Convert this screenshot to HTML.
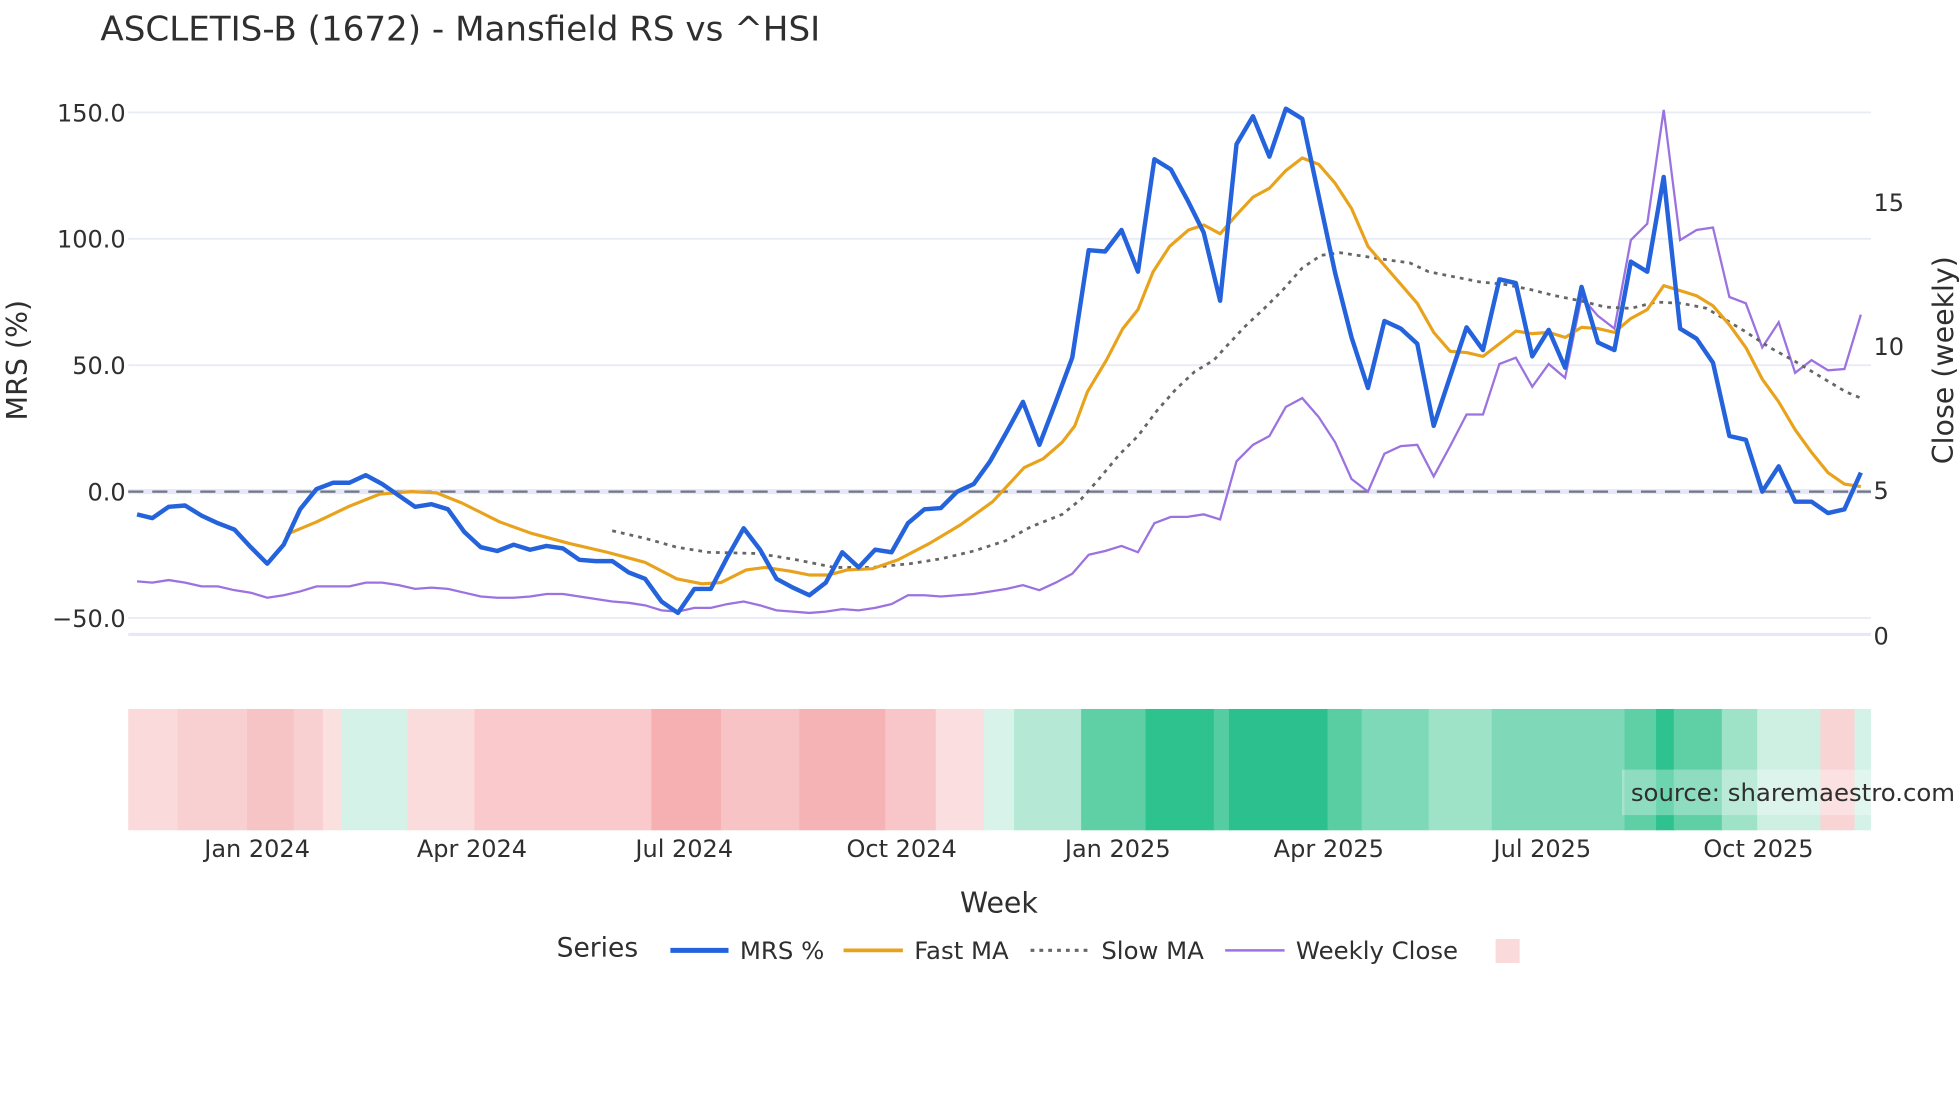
<!DOCTYPE html>
<html><head><meta charset="utf-8"><style>
html,body{margin:0;padding:0;background:#fff;overflow:hidden}
svg{display:block}
text{font-family:"DejaVu Sans","Liberation Sans",sans-serif;fill:#2f2f2f}
</style></head><body>
<svg width="1960" height="1102" viewBox="0 0 1550 872" xmlns="http://www.w3.org/2000/svg">
<rect width="1550" height="872" fill="#fff"/>
<text x="79" y="32" font-size="27" fill="#333">ASCLETIS-B (1672) - Mansfield RS vs ^HSI</text>
<!-- grid -->
<g stroke="#e8ecf4" stroke-width="1.5">
<line x1="101" x2="1480" y1="89" y2="89"/><line x1="101" x2="1480" y1="189" y2="189"/>
<line x1="101" x2="1480" y1="289" y2="289"/><line x1="101" x2="1480" y1="489" y2="489"/>
</g>
<line x1="101" x2="1480" y1="502" y2="502" stroke="#e6e8fa" stroke-width="2.5"/>
<line x1="101" x2="1480" y1="389" y2="389" stroke="#e6e8fa" stroke-width="4"/>
<line x1="101" x2="1480" y1="389" y2="389" stroke="#6e7681" stroke-width="1.8" stroke-dasharray="12,7"/>
<g font-size="19" text-anchor="end" fill="#333">
<text x="99" y="96">150.0</text><text x="99" y="196">100.0</text><text x="99" y="296">50.0</text>
<text x="99" y="396">0.0</text><text x="99" y="496">−50.0</text>
</g>
<g font-size="19" fill="#333">
<text x="1482" y="167">15</text><text x="1482" y="281">10</text><text x="1482" y="395">5</text><text x="1482" y="510">0</text>
</g>
<text transform="translate(21,285) rotate(-90)" font-size="22.5" text-anchor="middle">MRS (%)</text>
<text transform="translate(1545,285) rotate(-90)" font-size="22.5" text-anchor="middle">Close (weekly)</text>
<!-- series -->
<polyline fill="none" stroke="#9b72e0" stroke-width="1.8" points="108,460 120,461 133,459 146,461 159,464 172,464 185,467 198,469 211,473 224,471 237,468 250,464 263,464 276,464 289,461 302,461 315,463 328,466 341,465 354,466 367,469 380,472 393,473 406,473 419,472 432,470 445,470 458,472 471,474 484,476 497,477 510,479 523,483 536,484 549,481 562,481 575,478 588,476 601,479 614,483 627,484 640,485 653,484 666,482 679,483 692,481 705,478 718,471 731,471 744,472 757,471 770,470 783,468 796,466 809,463 822,467 835,461 848,454 861,439 874,436 887,432 900,437 913,414 926,409 939,409 952,407 965,411 978,365 991,352 1004,345 1017,322 1030,315 1043,330 1056,350 1069,379 1082,389 1095,359 1108,353 1121,352 1134,377 1147,353 1160,328 1173,328 1186,288 1199,283 1212,306 1225,288 1238,299 1251,235 1264,250 1277,260 1290,190 1303,177 1316,87 1329,190 1342,182 1355,180 1368,235 1381,240 1394,275 1407,255 1420,295 1433,285 1446,293 1459,292 1472,249"/>
<polyline fill="none" stroke="#666" stroke-width="2.2" stroke-dasharray="3,4" points="484,420 510,426 535,433 560,437 600,438 630,443 660,449 690,449 720,446 745,442 770,436 795,428 815,417 840,407 855,395 870,378 885,360 900,345 915,325 930,308 945,294 960,285 970,274 985,258 1000,244 1015,229 1030,212 1045,202 1060,200 1080,203 1100,206 1115,208 1130,215 1150,219 1170,223 1190,225 1210,229 1230,234 1250,238 1270,243 1290,244 1310,239 1330,240 1350,244 1365,253 1380,262 1400,275 1420,286 1440,298 1460,310 1472,315"/>
<polyline fill="none" stroke="#e8a21c" stroke-width="2.5" stroke-linejoin="round" points="226,423 250,413 275,401 300,391 325,389 345,390 365,398 395,413 420,422 450,430 480,437 510,445 535,458 555,462 570,461 590,451 605,449 625,452 640,455 655,455 670,451 690,450 710,443 735,430 760,415 785,397 810,370 825,363 840,350 850,337 860,310 875,285 888,260 900,245 912,215 925,195 940,182 952,178 965,185 978,170 991,156 1004,149 1017,135 1030,125 1043,130 1056,145 1069,165 1082,195 1095,210 1108,225 1121,240 1134,263 1147,278 1160,279 1173,282 1186,272 1199,262 1212,264 1225,263 1238,267 1251,259 1264,260 1277,263 1290,252 1303,245 1316,226 1329,230 1342,234 1355,242 1368,257 1381,275 1394,300 1407,318 1420,340 1433,358 1446,374 1459,383 1472,385"/>
<polyline fill="none" stroke="#2563dc" stroke-width="3.5" stroke-linejoin="round" points="108,407 120,410 133,401 146,400 159,408 172,414 185,419 198,433 211,446 224,431 237,403 250,387 263,382 276,382 289,376 302,383 315,392 328,401 341,399 354,403 367,421 380,433 393,436 406,431 419,435 432,432 445,434 458,443 471,444 484,444 497,453 510,458 523,476 536,485 549,466 562,466 575,441 588,418 601,435 614,458 627,465 640,471 653,461 666,437 679,449 692,435 705,437 718,414 731,403 744,402 757,389 770,383 783,365 796,342 809,318 822,352 835,318 848,283 861,198 874,199 887,182 900,215 913,126 926,134 939,158 952,184 965,238 978,114 991,92 1004,124 1017,86 1030,94 1043,155 1056,216 1069,267 1082,307 1095,254 1108,260 1121,272 1134,337 1147,298 1160,259 1173,277 1186,221 1199,224 1212,282 1225,261 1238,291 1251,227 1264,271 1277,277 1290,207 1303,215 1316,140 1329,260 1342,268 1355,287 1368,345 1381,348 1394,389 1407,369 1420,397 1433,397 1446,406 1459,403 1472,374"/>
<!-- heatmap -->
<g>
<rect x="101" y="561" width="40" height="96" fill="#fadadb"/>
<rect x="140" y="561" width="56" height="96" fill="#f9d0d1"/>
<rect x="195" y="561" width="38" height="96" fill="#f7c4c6"/>
<rect x="232" y="561" width="24" height="96" fill="#f9d0d1"/>
<rect x="255" y="561" width="16" height="96" fill="#fbe0e0"/>
<rect x="270" y="561" width="53" height="96" fill="#d4f2e8"/>
<rect x="322" y="561" width="54" height="96" fill="#fbdcdc"/>
<rect x="375" y="561" width="141" height="96" fill="#f9c9cb"/>
<rect x="515" y="561" width="56" height="96" fill="#f6b0b2"/>
<rect x="570" y="561" width="63" height="96" fill="#f8c3c5"/>
<rect x="632" y="561" width="69" height="96" fill="#f6b3b5"/>
<rect x="700" y="561" width="41" height="96" fill="#f8c6c8"/>
<rect x="740" y="561" width="39" height="96" fill="#fbdfe0"/>
<rect x="778" y="561" width="25" height="96" fill="#d8f3ea"/>
<rect x="802" y="561" width="54" height="96" fill="#b5e9d6"/>
<rect x="855" y="561" width="52" height="96" fill="#5fcfa6"/>
<rect x="906" y="561" width="55" height="96" fill="#2ec28f"/>
<rect x="960" y="561" width="13" height="96" fill="#55cca1"/>
<rect x="972" y="561" width="79" height="96" fill="#2bc08d"/>
<rect x="1050" y="561" width="28" height="96" fill="#5acea3"/>
<rect x="1077" y="561" width="54" height="96" fill="#7ed9b8"/>
<rect x="1130" y="561" width="51" height="96" fill="#9ee2c8"/>
<rect x="1180" y="561" width="106" height="96" fill="#7fd9b9"/>
<rect x="1285" y="561" width="26" height="96" fill="#5fcfa6"/>
<rect x="1310" y="561" width="15" height="96" fill="#2ec28f"/>
<rect x="1324" y="561" width="39" height="96" fill="#5fcfa6"/>
<rect x="1362" y="561" width="29" height="96" fill="#9ee2c8"/>
<rect x="1390" y="561" width="51" height="96" fill="#cdf0e3"/>
<rect x="1440" y="561" width="28" height="96" fill="#f9d4d5"/>
<rect x="1467" y="561" width="13" height="96" fill="#d4f2e8"/>
</g>
<rect x="1283" y="609" width="197" height="36" fill="#fff" fill-opacity="0.3"/>
<text x="1290" y="634" font-size="19.3" fill="#777">source: sharemaestro.com</text>
<g font-size="19" text-anchor="middle" fill="#333">
<text x="203" y="678">Jan 2024</text><text x="373" y="678">Apr 2024</text><text x="541" y="678">Jul 2024</text>
<text x="713" y="678">Oct 2024</text><text x="884" y="678">Jan 2025</text><text x="1051" y="678">Apr 2025</text>
<text x="1220" y="678">Jul 2025</text><text x="1391" y="678">Oct 2025</text>
</g>
<text x="790" y="722" font-size="22.5" text-anchor="middle">Week</text>
<text x="440" y="757" font-size="21">Series</text>
<line x1="530" x2="576" y1="752" y2="752" stroke="#2563dc" stroke-width="4"/>
<text x="585" y="759" font-size="19.3">MRS %</text>
<line x1="667" x2="714" y1="752" y2="752" stroke="#e8a21c" stroke-width="3"/>
<text x="723" y="759" font-size="19.3">Fast MA</text>
<line x1="815" x2="860" y1="752" y2="752" stroke="#666" stroke-width="2.5" stroke-dasharray="3,4"/>
<text x="871" y="759" font-size="19.3">Slow MA</text>
<line x1="969" x2="1016" y1="752" y2="752" stroke="#9b72e0" stroke-width="2"/>
<text x="1025" y="759" font-size="19.3">Weekly Close</text>
<rect x="1183" y="743" width="19" height="19" fill="#fadadb"/>
</svg>
</body></html>
